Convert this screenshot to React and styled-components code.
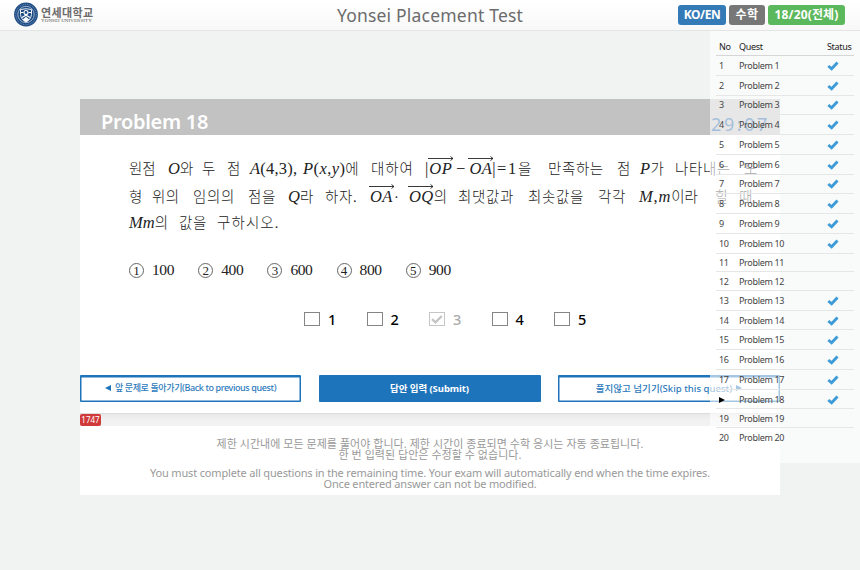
import React from "react";
import styled, { createGlobalStyle } from "styled-components";

const Global = createGlobalStyle`
  * { box-sizing: border-box; }
  body {
    margin: 0;
    height: 570px;
    overflow: hidden;
    background: #f1f3f3;
    font-family: "Noto Sans", "Noto Sans CJK KR", sans-serif;
    color: #333;
  }
`;

const Page = styled.div`
  position: relative;
  height: 570px;
  white-space: nowrap;
`;

const Header = styled.header`
  display: grid;
  grid-template-columns: 1fr auto 1fr;
  align-items: center;
  height: 31px;
  padding: 0 15px 1px 14px;
  background: linear-gradient(#fff, #f8f8f8);
  border-bottom: 1px solid #e4e5e5;
`;

const Brand = styled.div`
  display: flex;
  align-items: center;
  gap: 3px;
  height: 28px;
`;

const BrandText = styled.div`
  display: flex;
  flex-direction: column;
  padding-top: 1px;
`;

const BrandName = styled.span`
  font: 700 11px/12px "Noto Sans CJK KR", sans-serif;
  letter-spacing: 0.35px;
  color: #6b6b6b;
`;

const BrandSub = styled.span`
  font: 400 5px/6px "Liberation Serif", serif;
  letter-spacing: 0.08px;
  color: #555;
`;

const Title = styled.h1`
  margin: 0 0 0 1px;
  font-size: 17.5px;
  line-height: 28px;
  font-weight: 400;
  letter-spacing: 0.2px;
  color: #6c6c6c;
`;

const Badges = styled.div`
  display: flex;
  justify-content: flex-end;
  gap: 3px;
`;

const Badge = styled.span`
  width: ${(p) => p.$w}px;
  height: 20px;
  border-radius: 3px;
  background: ${(p) => p.$bg};
  color: #fff;
  font-size: 12px;
  line-height: 20px;
  font-weight: 700;
  letter-spacing: ${(p) => p.$ls}px;
  text-align: center;
`;

const Main = styled.main`
  width: 700px;
  margin: 68px auto 0;
`;

const Card = styled.section`
  height: 315px;
  background: #fff;
  border-bottom: 1px solid #dcdcdc;
`;

const CardHead = styled.div`
  display: flex;
  justify-content: space-between;
  height: 36px;
  padding: 0 10px 0 21px;
  background: #c2c2c2;
`;

const CardTitle = styled.h2`
  margin: 0;
  padding-top: 9px;
  font-size: 20px;
  line-height: 27px;
  font-weight: 600;
  letter-spacing: -0.3px;
  color: #fff;
`;

const Timer = styled.span`
  padding-top: 12px;
  font-size: 18px;
  line-height: 27px;
  letter-spacing: 2.6px;
  color: #1a5ea6;
`;

const Question = styled.div`
  display: flex;
  flex-direction: column;
  height: 149px;
  padding: 20px 0 0 49px;
  font-family: "Liberation Serif", "Noto Sans CJK KR", serif;
  color: #222;
`;

const Line = styled.div`
  display: grid;
  grid-template-columns: ${(p) => p.$cols};
  height: ${(p) => p.$h}px;
  line-height: ${(p) => p.$h}px;
`;

const Word = styled.span`
  font-size: 14.5px;
  font-weight: 300;
  letter-spacing: ${(p) => p.$ls || 0}px;
`;

const Mathy = styled.span`
  font-size: 16.5px;
  font-weight: 400;
  letter-spacing: ${(p) => p.$ls || 0}px;
`;

const Minus = styled(Mathy)`
  margin: 0 4px;
`;

const VecBox = styled.span`
  position: relative;
  display: inline-block;
  font-size: 16.5px;
  line-height: 20px;
  font-style: italic;
  font-weight: 400;
  letter-spacing: 0.4px;
`;

const VecArrow = styled.svg`
  position: absolute;
  left: -1px;
  top: -4px;
`;

const Choices = styled.div`
  display: grid;
  grid-template-columns: repeat(5, 69.2px);
  margin-top: 23px;
  line-height: 24px;
`;

const Choice = styled.div`
  display: flex;
  align-items: center;
  gap: 8px;
  font-size: 15.5px;
  letter-spacing: -0.4px;
`;

const Circle = styled.span`
  width: 15px;
  height: 15px;
  border: 1px solid #666;
  border-radius: 50%;
  font-size: 13px;
  line-height: 13px;
  letter-spacing: 0;
  text-align: center;
`;

const Answers = styled.div`
  display: grid;
  grid-template-columns: repeat(5, 62.5px);
  align-items: center;
  height: 22px;
  margin: 24px 0 0 224px;
`;

const Answer = styled.label`
  display: flex;
  align-items: center;
  gap: 8px;
  font-size: 14.5px;
  line-height: 22px;
  font-weight: 500;
  color: ${(p) => (p.$off ? "#aaa" : "#000")};
`;

const Box = styled.span`
  display: flex;
  align-items: center;
  justify-content: center;
  width: 16px;
  height: 14px;
  border: 1px solid ${(p) => (p.$off ? "#c6c6c6" : "#858585")};
  background: #fff;
`;

const Actions = styled.div`
  display: grid;
  grid-template-columns: 221px 222px 222px;
  justify-content: space-between;
  margin-top: 45px;
`;

const Button = styled.button`
  display: flex;
  align-items: center;
  justify-content: center;
  gap: 4px;
  height: 27px;
  padding: 0 0 3px;
  border: 1.500px solid #1e74ba;
  border-width: 2px 1px 1px;
  border-radius: 1px;
  background: ${(p) => (p.$solid ? "#1e74ba" : "#fff")};
  box-shadow: inset 0 0 0 0.5px #1e74ba;
  color: ${(p) => (p.$solid ? "#fff" : "#2c7abc")};
  font-family: inherit;
  font-size: ${(p) => p.$size}px;
  font-weight: ${(p) => (p.$solid ? 700 : 500)};
  letter-spacing: ${(p) => p.$ls}px;
`;

const Strip = styled.div`
  height: 12px;
  background: linear-gradient(#e9e9e9, #f1f1f1 50%, #f2f3f3);
`;

const Count = styled.span`
  display: block;
  width: 21px;
  height: 12px;
  border-radius: 2px;
  background: #d13a3a;
  color: #fff;
  font-size: 8px;
  line-height: 12px;
  text-align: center;
`;

const Notes = styled.div`
  height: 69px;
  padding-top: 12px;
  background: #fff;
  text-align: center;
  font-size: 11px;
  font-weight: 400;
  color: #999;
`;

const Note = styled.p`
  margin: 0;
  height: ${(p) => p.$h}px;
  line-height: 12px;
  letter-spacing: ${(p) => p.$ls}px;
`;

const Side = styled.aside`
  position: absolute;
  top: 31px;
  right: 0;
  width: 150px;
  height: 432px;
  padding: 6px 6px 0;
  background: rgba(255, 255, 255, 0.6);
`;

const SideRow = styled.div`
  display: grid;
  grid-template-columns: 20px 1fr 27px;
  align-items: center;
  height: ${(p) => p.$h}px;
  padding: 1px 0 0 3px;
  border-bottom: ${(p) => (p.$last ? "0" : "1px")} solid ${(p) => (p.$head ? "#d6d6d6" : "#e6e6e6")};
  font-size: 9px;
  line-height: 12px;
  letter-spacing: -0.33px;
  color: ${(p) => (p.$head ? "#222" : "#444")};
`;

const Vec = ({ children, w }) => (
  <VecBox>
    {children}
    <VecArrow width={w} height="6">
      <path d={`M0 3.5H${w - 1}M${w - 3.5} 1.500L${w - 1} 3.500L${w - 3.5} 5.500`} fill="none" stroke="#222" strokeWidth="0.9" />
    </VecArrow>
  </VecBox>
);

const Crest = () => (
  <svg width="24" height="25" viewBox="0 0 24 25">
    <circle cx="12" cy="12.5" r="11.9" fill="#1d4a82" />
    <circle cx="12" cy="12.5" r="10.2" fill="none" stroke="#5f83b0" strokeWidth="1.2" strokeDasharray="1 0.8" />
    <circle cx="12" cy="12.5" r="8.2" fill="#1d4a82" stroke="#d5e0ec" strokeWidth="0.7" />
    <path d="M6.500 7.500Q12 6 17.500 7.500V12.500Q17 17.500 12 20Q7 17.500 6.500 12.500Z" fill="#1d4a82" stroke="#e8eef5" strokeWidth="1" />
    <circle cx="12" cy="10.500" r="2" fill="none" stroke="#fff" strokeWidth="1.100" />
    <path d="M7 10.500H9.500M14.500 10.500H17M8 15.500L12 13.200L16 15.500" stroke="#fff" strokeWidth="1.200" fill="none" />
    <path d="M8.500 17.800L12 14.800L15.500 17.800L12 20Z" fill="#fff" />
  </svg>
);

const Tick = () => (
  <svg width="12" height="10" viewBox="0 0 12 10">
    <path d="M1.300 5L4.600 7.800L10.500 1.600" fill="none" stroke="#3d9bd8" strokeWidth="2.900" />
  </svg>
);

const Tri = ({ left, color, size = 6 }) => (
  <svg width={size} height={size} viewBox="0 0 6 6">
    <path d={left ? "M6 0V6L0 3Z" : "M0 0V6L6 3Z"} fill={color} />
  </svg>
);

const undone = [11, 12, 19, 20];
const problems = Array.from({ length: 20 }, (_, i) => ({
  no: i + 1,
  done: !undone.includes(i + 1),
}));

const choices = [100, 400, 600, 800, 900];
const picked = 3;
const current = 18;

export default function App() {
  return (
    <Page>
      <Global />
      <Header>
        <Brand>
          <Crest />
          <BrandText>
            <BrandName>연세대학교</BrandName>
            <BrandSub>YONSEI UNIVERSITY</BrandSub>
          </BrandText>
        </Brand>
        <Title>Yonsei Placement Test</Title>
        <Badges>
          <Badge $w={48} $bg="#337ab7" $ls={-0.4}>KO/EN</Badge>
          <Badge $w={36} $bg="#777" $ls={0.4}>수학</Badge>
          <Badge $w={77} $bg="#5cb85c" $ls={0.15}>18/20(전체)</Badge>
        </Badges>
      </Header>

      <Main>
        <Card>
          <CardHead>
            <CardTitle>Problem 18</CardTitle>
            <Timer>29:07</Timer>
          </CardHead>
          <Question>
            <Line $h={28} $cols="39px 34px 25px 23px 53px 68px 54px 123px 69px 23px 35px 69px auto">
              <Word>원점</Word>
              <Word><Mathy><i>O</i></Mathy>와</Word>
              <Word>두</Word>
              <Word>점</Word>
              <Mathy $ls={0.2}><i>A</i>(4,3),</Mathy>
              <Word><Mathy $ls={0.4}><i>P</i>(<i>x</i>,<i>y</i>)</Mathy>에</Word>
              <Word $ls={0.9}>대하여</Word>
              <Word>
                <Mathy $ls={1}>|</Mathy><Vec w={26}>OP</Vec><Minus>−</Minus><Vec w={26}>OA</Vec><Mathy $ls={1.6}>|=1</Mathy>을
              </Word>
              <Word $ls={0.6}>만족하는</Word>
              <Word>점</Word>
              <Word><Mathy $ls={0.5}><i>P</i></Mathy>가</Word>
              <Word $ls={0.6}>나타내는</Word>
              <Word>도</Word>
            </Line>
            <Line $h={28} $cols="23px 41px 55px 40px 37px 45px 24px 15px 49px 70px 70px 41px 76px 24px auto">
              <Word>형</Word>
              <Word $ls={0.4}>위의</Word>
              <Word $ls={0.6}>임의의</Word>
              <Word $ls={0.6}>점을</Word>
              <Word><Mathy><i>Q</i></Mathy>라</Word>
              <Word $ls={0.6}>하자.</Word>
              <Word><Vec w={26}>OA</Vec></Word>
              <Word>·</Word>
              <Word><Vec w={26}>OQ</Vec>의</Word>
              <Word $ls={0.7}>최댓값과</Word>
              <Word $ls={0.7}>최솟값을</Word>
              <Word $ls={0.6}>각각</Word>
              <Word><Mathy $ls={0.8}><i>M</i>,<i>m</i></Mathy>이라</Word>
              <Word>할</Word>
              <Word>때</Word>
            </Line>
            <Line $h={24} $cols="50px 38px auto">
              <Word><Mathy><i>Mm</i></Mathy>의</Word>
              <Word $ls={0.6}>값을</Word>
              <Word $ls={1.1}>구하시오.</Word>
            </Line>
            <Choices>
              {choices.map((c, i) => (
                <Choice key={c}>
                  <Circle>{i + 1}</Circle>
                  {c}
                </Choice>
              ))}
            </Choices>
          </Question>
          <Answers>
            {choices.map((c, i) => (
              <Answer key={c} $off={i + 1 === picked}>
                <Box $off={i + 1 === picked}>
                  {i + 1 === picked && (
                    <svg width="12" height="9" viewBox="0 0 12 9">
                      <path d="M1 4.200L4.500 7.300L10.800 1" fill="none" stroke="#c4c4c4" strokeWidth="2.300" />
                    </svg>
                  )}
                </Box>
                {i + 1}
              </Answer>
            ))}
          </Answers>
          <Actions>
            <Button $size={9} $ls={-0.38}>
              <Tri left color="#1e74ba" />
              앞 문제로 돌아가기(Back to previous quest)
            </Button>
            <Button $solid $size={9.5} $ls={-0.07}>답안 입력 (Submit)</Button>
            <Button $size={9.5} $ls={0.02}>
              풀지않고 넘기기(Skip this quest)
              <Tri color="#1e74ba" />
            </Button>
          </Actions>
        </Card>
        <Strip>
          <Count>1747</Count>
        </Strip>
        <Notes>
          <Note $h={11} $ls={0.04}>제한 시간내에 모든 문제를 풀어야 합니다. 제한 시간이 종료되면 수학 응시는 자동 종료됩니다.</Note>
          <Note $h={18} $ls={0.04}>한 번 입력된 답안은 수정할 수 없습니다.</Note>
          <Note $h={11} $ls={-0.163}>You must complete all questions in the remaining time. Your exam will automatically end when the time expires.</Note>
          <Note $h={12} $ls={-0.17}>Once entered answer can not be modified.</Note>
        </Notes>
      </Main>

      <Side>
        <SideRow $h={19} $head>
          <span>No</span>
          <span>Quest</span>
          <span>Status</span>
        </SideRow>
        {problems.map((p) => (
          <SideRow key={p.no} $h={p.done ? 19.75 : 18.7} $last={p.no === 20}>
            {p.no === current ? <Tri color="#000" /> : <span>{p.no}</span>}
            <span>Problem {p.no}</span>
            {p.done && <Tick />}
          </SideRow>
        ))}
      </Side>
    </Page>
  );
}
